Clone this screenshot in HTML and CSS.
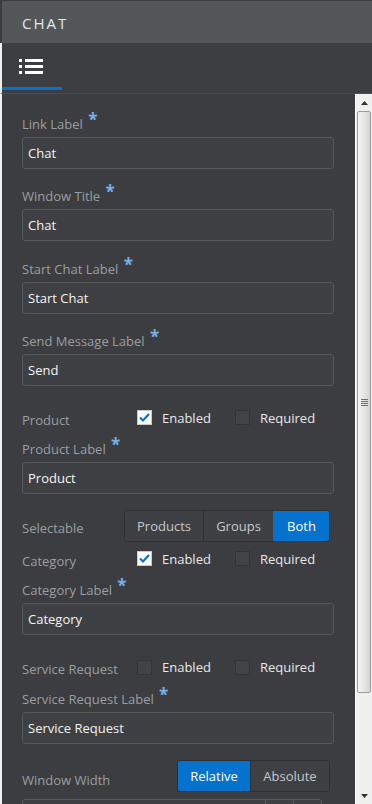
FILE: index.html
```html
<!DOCTYPE html>
<html lang="en">
<head>
<meta charset="UTF-8">
<meta name="viewport" content="width=device-width, initial-scale=1.0">
<title>Chat</title>
<link rel="stylesheet" href="styles.css">
</head>
<body>
  <div class="app">
    <div class="header">CHAT</div>

    <div class="tabs">
      <div class="tab tab--active">
        <svg width="24" height="15" viewBox="0 0 24 15">
          <rect x="0" y="0" width="3" height="3" fill="#fff"/>
          <rect x="6" y="0" width="18" height="3" fill="#fff"/>
          <rect x="0" y="6" width="3" height="3" fill="#fff"/>
          <rect x="6" y="6" width="18" height="3" fill="#fff"/>
          <rect x="0" y="12" width="3" height="3" fill="#fff"/>
          <rect x="6" y="12" width="18" height="3" fill="#fff"/>
        </svg>
      </div>
    </div>

    <div class="main">
      <div class="form">
        <div class="field">
          <div class="field__label">Link Label <span class="req">*</span></div>
          <div class="input">Chat</div>
        </div>
        <div class="field">
          <div class="field__label">Window Title <span class="req">*</span></div>
          <div class="input">Chat</div>
        </div>
        <div class="field">
          <div class="field__label">Start Chat Label <span class="req">*</span></div>
          <div class="input">Start Chat</div>
        </div>
        <div class="field">
          <div class="field__label">Send Message Label <span class="req">*</span></div>
          <div class="input">Send</div>
        </div>

        <div class="row">
          <div class="row__label">Product</div>
          <div class="check"><span class="box box--on"><svg width="13" height="13" viewBox="0 0 13 13"><path d="M2 6.5 L5 9.5 L11 3" fill="none" stroke="#0572ce" stroke-width="2.2"/></svg></span>Enabled</div>
          <div class="check"><span class="box"></span>Required</div>
        </div>
        <div class="field">
          <div class="field__label">Product Label <span class="req">*</span></div>
          <div class="input">Product</div>
        </div>

        <div class="seg-row">
          <div class="row__label">Selectable</div>
          <div class="seg">
            <div class="seg__btn seg__btn--products">Products</div>
            <div class="seg__btn seg__btn--groups">Groups</div>
            <div class="seg__btn seg__btn--both seg__btn--on">Both</div>
          </div>
        </div>
        <div class="row">
          <div class="row__label">Category</div>
          <div class="check"><span class="box box--on"><svg width="13" height="13" viewBox="0 0 13 13"><path d="M2 6.5 L5 9.5 L11 3" fill="none" stroke="#0572ce" stroke-width="2.2"/></svg></span>Enabled</div>
          <div class="check"><span class="box"></span>Required</div>
        </div>
        <div class="field">
          <div class="field__label">Category Label <span class="req">*</span></div>
          <div class="input">Category</div>
        </div>

        <div class="row">
          <div class="row__label">Service Request</div>
          <div class="check"><span class="box"></span>Enabled</div>
          <div class="check"><span class="box"></span>Required</div>
        </div>
        <div class="field">
          <div class="field__label">Service Request Label <span class="req">*</span></div>
          <div class="input">Service Request</div>
        </div>

        <div class="seg-row">
          <div class="row__label row__label--low">Window Width</div>
          <div class="seg">
            <div class="seg__btn seg__btn--rel seg__btn--on">Relative</div>
            <div class="seg__btn seg__btn--abs">Absolute</div>
          </div>
        </div>
        <div class="number">
          <div class="number__value"></div>
          <div class="number__btn"></div>
          <div class="number__btn"></div>
        </div>
      </div>

      <div class="scrollbar">
        <div class="scrollbar__arrow">
          <svg width="7" height="4" viewBox="0 0 7 4"><path d="M0 4 L3.5 0 L7 4 Z" fill="#333"/></svg>
        </div>
        <div class="scrollbar__thumb">
          <div class="grip"></div>
        </div>
        <div class="scrollbar__track"></div>
        <div class="scrollbar__arrow">
          <svg width="7" height="4" viewBox="0 0 7 4"><path d="M0 0 L7 0 L3.5 4 Z" fill="#333"/></svg>
        </div>
      </div>
    </div>
  </div>
</body>
</html>
```

FILE: styles.css
```css
body {
  margin: 0;
  padding: 0;
  background-color: #f0f0f0;
  font-family: "Open Sans", "Noto Sans", Arial, sans-serif;
  font-size: 13px;
}

.app {
  display: flex;
  flex-direction: column;
  width: 372px;
  height: 804px;
  overflow: hidden;
}

.header {
  height: 40px;
  padding-top: 2px;
  background-color: #53575a;
  border-top: 1px solid #3a3c3f;
  border-left: 2px solid #3a3c3f;
  padding-left: 20px;
  color: #e4e6e8;
  font-size: 15px;
  letter-spacing: 2px;
  line-height: 40px;
  flex-shrink: 0;
}

.tabs {
  height: 50px;
  background-color: #3d3e41;
  border-left: 2px solid #f0f0f0;
  border-bottom: 1px solid #4b4c4f;
  display: flex;
  flex-shrink: 0;
}

.tab {
  width: 60px;
  height: 47px;
  display: flex;
  align-items: flex-start;
  padding-top: 16px;
  padding-left: 17px;
  box-sizing: border-box;
}

.tab--active {
  border-bottom: 3px solid #0572ce;
  height: 47px;
}

.main {
  flex: 1;
  display: flex;
  border-left: 2px solid #f0f0f0;
  min-height: 0;
}

.form {
  flex: 1;
  display: flex;
  flex-direction: column;
  background-color: #3c3d40;
  padding: 21px 21px 0 20px;
  overflow: hidden;
}

.field {
  margin-bottom: 18.3px;
  flex-shrink: 0;
}

.field__label {
  color: #9a9ea2;
  line-height: 18px;
  height: 18px;
  margin-bottom: 4px;
  white-space: nowrap;
}

.req {
  color: #78b0e8;
  font-size: 17px;
  font-weight: bold;
  margin-left: 2px;
  vertical-align: 3px;
  line-height: 10px;
}

.input {
  height: 32px;
  box-sizing: border-box;
  border: 1px solid #55575b;
  border-radius: 3px;
  background-color: #3f4043;
  color: #f4f4f4;
  padding-left: 5px;
  line-height: 30px;
}

.row {
  display: flex;
  align-items: center;
  height: 24px;
  margin-top: 2px;
  margin-bottom: 10px;
  flex-shrink: 0;
}

.row__label {
  width: 115px;
  color: #9a9ea2;
  white-space: nowrap;
  flex-shrink: 0;
  padding-top: 3px;
}

.row__label--low {
  padding-top: 7px;
}

.check {
  width: 98px;
  display: flex;
  align-items: center;
  color: #e8e8e8;
  padding-bottom: 1px;
}

.box {
  width: 15px;
  height: 15px;
  box-sizing: border-box;
  border: 1px solid #333437;
  background-color: #424346;
  margin-right: 10px;
  display: flex;
  align-items: center;
  justify-content: center;
}

.box--on {
  background-color: #ffffff;
  border-color: #c9c9c9;
}

.seg-row {
  display: flex;
  justify-content: space-between;
  align-items: center;
  height: 32px;
  padding-right: 4px;
  margin-top: -2px;
  margin-bottom: 3px;
  flex-shrink: 0;
}

.seg-row .row__label {
  width: auto;
}

.seg {
  display: flex;
  height: 32px;
  border-radius: 3px;
  overflow: hidden;
  border: 1px solid #2f3033;
  box-sizing: border-box;
}

.seg__btn {
  display: flex;
  align-items: center;
  justify-content: center;
  background-color: #3f4043;
  color: #c5c8cb;
  border-left: 1px solid #2f3033;
  font-size: 13px;
}

.seg__btn:first-child {
  border-left: none;
}

.seg__btn--on {
  background-color: #0572ce;
  color: #ffffff;
  border-color: #0572ce;
}

.seg__btn--products { width: 78px; }
.seg__btn--groups { width: 69px; }
.seg__btn--both { width: 55px; }
.seg__btn--rel { width: 72px; }
.seg__btn--abs { width: 78px; }

.number {
  margin-top: 4px;
  width: 298px;
  height: 31px;
  display: flex;
  flex-shrink: 0;
  border: 1px solid #55575b;
  border-radius: 3px;
  background-color: #3f4043;
}

.number__value {
  flex: 1;
}

.number__btn {
  width: 27px;
  border-left: 1px solid #55575b;
}

.scrollbar {
  width: 16px;
  border-left: 1px solid #ffffff;
  background-color: #f0f0f0;
  display: flex;
  flex-direction: column;
}

.scrollbar__arrow {
  height: 17px;
  display: flex;
  align-items: center;
  justify-content: center;
  flex-shrink: 0;
}

.scrollbar__thumb {
  height: 582px;
  margin: 0 1px 0 1px;
  border: 1px solid #9c9c9c;
  border-radius: 2px;
  background: linear-gradient(to right, #f4f4f4, #e6e6e6 50%, #d4d4d6);
  display: flex;
  align-items: center;
  justify-content: center;
  flex-shrink: 0;
  box-sizing: border-box;
}

.grip {
  width: 7px;
  height: 7px;
  background: repeating-linear-gradient(to bottom, #6e6e6e 0, #6e6e6e 1px, transparent 1px, transparent 2px);
}

.scrollbar__track {
  flex: 1;
}
```
